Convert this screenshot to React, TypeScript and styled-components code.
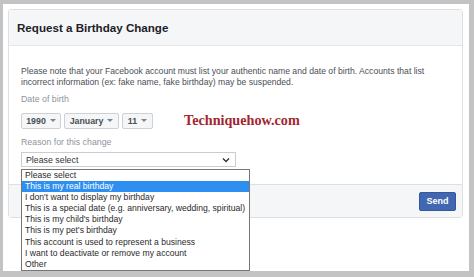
import React from "react";
import styled, { createGlobalStyle } from "styled-components";

const GlobalStyle = createGlobalStyle`
    body {
        margin: 0;
        font-family: "Liberation Sans", Arial, sans-serif;
    }
`;

const reasons = [
    "Please select",
    "This is my real birthday",
    "I don't want to display my birthday",
    "This is a special date (e.g. anniversary, wedding, spiritual)",
    "This is my child's birthday",
    "This is my pet's birthday",
    "This account is used to represent a business",
    "I want to deactivate or remove my account",
    "Other",
];

const App = () => {
    return <Frame>
        <GlobalStyle />
        <Card>
            <Header>
                <Title>Request a Birthday Change</Title>
            </Header>
            <Body>
                <Note>
                    Please note that your Facebook account must list your authentic name and date of birth. Accounts that list
                    incorrect information (ex: fake name, fake birthday) may be suspended.
                </Note>
                <Label>Date of birth</Label>
                <DateRow>
                    <DateSelect $w={40}>1990<Caret /></DateSelect>
                    <DateSelect $w={55}>January<Caret /></DateSelect>
                    <DateSelect $w={31}>11<Caret /></DateSelect>
                    <Watermark>Techniquehow.com</Watermark>
                </DateRow>
                <Label $gap={8}>Reason for this change</Label>
                <SelectWrap>
                    <SelectBox>
                        <span>Please select</span>
                        <svg width="8" height="6" viewBox="0 0 8 6">
                            <polyline points="1,1.5 4,4.5 7,1.5" fill="none" stroke="#333" strokeWidth="1.4" />
                        </svg>
                    </SelectBox>
                    <OptionList>
                        {reasons.map((r, i) => <Option key={r} $active={i === 1}>{r}</Option>)}
                    </OptionList>
                </SelectWrap>
            </Body>
            <Footer>
                <SendButton>Send</SendButton>
            </Footer>
        </Card>
    </Frame>
}

const Frame = styled.div`
    width: 474px;
    height: 277px;
    box-sizing: border-box;
    border-style: solid;
    border-color: #c3c3c3;
    border-width: 4px 5px 6px 3px;
    background: #fff;
    padding: 5px 0 0 5px;
`

const Card = styled.div`
    width: 455px;
    box-sizing: border-box;
    border: 1px solid #dddfe2;
    border-radius: 3px;
    background: #fff;
`

const Header = styled.div`
    height: 35px;
    display: flex;
    align-items: center;
    padding-left: 8px;
    background: #f5f6f7;
    border-bottom: 1px solid #e5e6e9;
`

const Title = styled.div`
    font-size: 11.6px;
    font-weight: bold;
    color: #1d2129;
`

const Body = styled.div`
    padding: 20px 12px 17px;
`

const Note = styled.p`
    margin: 0;
    font-size: 8.65px;
    line-height: 11px;
    color: #4b4f56;
`

const Label = styled.div<{ $gap?: number }>`
    margin-top: ${(p) => p.$gap ?? 6}px;
    font-size: 8.8px;
    line-height: 11px;
    color: #90949c;
`

const DateRow = styled.div`
    display: flex;
    align-items: center;
    gap: 3px;
    margin-top: 7px;
`

const DateSelect = styled.div<{ $w: number }>`
    width: ${(p) => p.$w}px;
    height: 16px;
    box-sizing: border-box;
    display: flex;
    align-items: center;
    justify-content: center;
    gap: 4px;
    border: 1px solid #ced0d4;
    border-radius: 2px;
    background: #f5f6f7;
    font-size: 8.8px;
    font-weight: bold;
    color: #4b4f56;
`

const Caret = styled.span`
    width: 0;
    height: 0;
    border-left: 3px solid transparent;
    border-right: 3px solid transparent;
    border-top: 3px solid #7f838a;
`

const Watermark = styled.div`
    margin-left: 28px;
    font-family: "Liberation Serif", "Times New Roman", serif;
    font-weight: bold;
    font-size: 14.2px;
    color: #a3262f;
`

const SelectWrap = styled.div`
    position: relative;
    width: 215px;
    margin-top: 4px;
`

const SelectBox = styled.div`
    height: 15px;
    box-sizing: border-box;
    display: flex;
    align-items: center;
    justify-content: space-between;
    padding: 0 5px 0 4px;
    border: 1px solid #c9ccd1;
    background: #fff;
    font-size: 8.8px;
    color: #333;
`

const OptionList = styled.div`
    position: absolute;
    top: 17px;
    left: 0;
    width: 229px;
    box-sizing: border-box;
    border: 1px solid #767676;
    background: #fff;
    z-index: 2;
`

const Option = styled.div<{ $active: boolean }>`
    height: 11.1px;
    line-height: 11.1px;
    padding-left: 3px;
    font-size: 8.6px;
    white-space: nowrap;
    color: ${(p) => (p.$active ? "#fff" : "#2a2a2a")};
    background: ${(p) => (p.$active ? "#2e8ff0" : "transparent")};
`

const Footer = styled.div`
    height: 32px;
    display: flex;
    align-items: center;
    justify-content: flex-end;
    padding-right: 6px;
    background: #f5f6f7;
    border-top: 1px solid #dddfe2;
`

const SendButton = styled.div`
    width: 37px;
    height: 19px;
    box-sizing: border-box;
    display: flex;
    align-items: center;
    justify-content: center;
    background: #4267b2;
    border: 1px solid #365899;
    border-radius: 2px;
    color: #fff;
    font-size: 9px;
    font-weight: bold;
`

export default App;
